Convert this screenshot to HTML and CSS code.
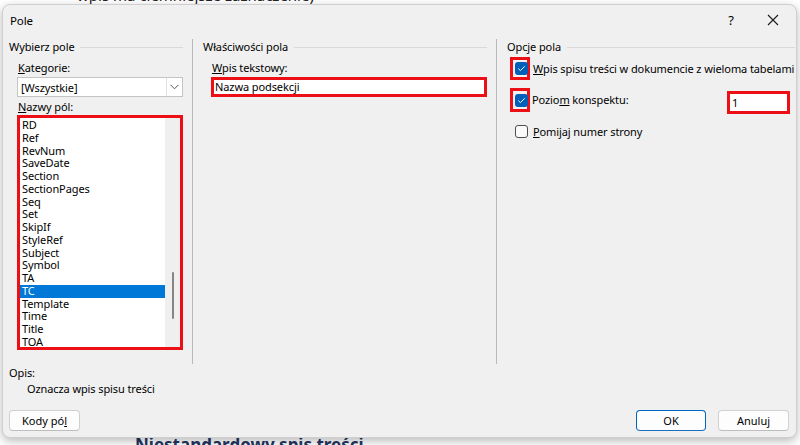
FILE: index.html
```html
<!DOCTYPE html>
<html lang="pl">
<head>
<meta charset="utf-8">
<title>Pole</title>
<link rel="stylesheet" href="styles.css">
</head>
<body>
<div class="doc-text doc-top">wpis ma ciemniejsze zaznaczenie)</div>
<div class="doc-text doc-bottom">Niestandardowy spis treści</div>

<div class="dialog">
  <div class="titlebar">
    <span class="title">Pole</span>
    <div class="tb-buttons">
      <span class="tb-btn help">?</span>
      <span class="tb-btn close">
        <svg width="12" height="12" viewBox="0 0 12 12"><path d="M1 1 L11 11 M11 1 L1 11" stroke="#1a1a1a" stroke-width="1.1" fill="none"/></svg>
      </span>
    </div>
  </div>

  <div class="main">
    <section class="col col1">
      <div class="group-head">Wybierz pole</div>
      <div class="col-body">
        <div class="lbl lbl-first"><u>K</u>ategorie:</div>
        <div class="combo">
          <span class="combo-text">[Wszystkie]</span>
          <span class="combo-btn">
            <svg width="9" height="6" viewBox="0 0 9 6"><path d="M0.5 0.8 L4.5 4.8 L8.5 0.8" stroke="#555" stroke-width="1" fill="none"/></svg>
          </span>
        </div>
        <div class="lbl lbl-second"><u>N</u>azwy pól:</div>
        <div class="listbox mark">
          <ul class="items">
            <li>RD</li><li>Ref</li><li>RevNum</li><li>SaveDate</li><li>Section</li><li>SectionPages</li><li>Seq</li><li>Set</li><li>SkipIf</li><li>StyleRef</li><li>Subject</li><li>Symbol</li><li>TA</li><li class="sel">TC</li><li>Template</li><li>Time</li><li>Title</li><li>TOA</li>
          </ul>
          <div class="scrollbar"><div class="thumb"></div></div>
        </div>
      </div>
    </section>

    <section class="col col2">
      <div class="group-head">Właściwości pola</div>
      <div class="col-body">
        <div class="lbl lbl-first"><u>W</u>pis tekstowy:</div>
        <div class="textbox mark">Nazwa podsekcji</div>
      </div>
    </section>

    <section class="col col3">
      <div class="group-head">Opcje pola</div>
      <div class="opt opt1">
        <span class="mark cbwrap"><span class="cb on"><svg width="11" height="11" viewBox="0 0 11 11"><path d="M2.3 5.6 L4.4 7.6 L8.7 3.3" stroke="#fff" stroke-width="1" fill="none"/></svg></span></span>
        <span class="opt-label"><u>W</u>pis spisu treści w dokumencie z wieloma tabelami</span>
      </div>
      <div class="opt opt2">
        <span class="mark cbwrap cbwrap2"><span class="cb on"><svg width="11" height="11" viewBox="0 0 11 11"><path d="M2.3 5.6 L4.4 7.6 L8.7 3.3" stroke="#fff" stroke-width="1" fill="none"/></svg></span></span>
        <span class="opt-label">Pozio<u>m</u> konspektu:</span>
        <span class="mark levelbox">1</span>
      </div>
      <div class="opt opt3">
        <span class="cb off"></span>
        <span class="opt-label"><u>P</u>omijaj numer strony</span>
      </div>
    </section>
  </div>

  <div class="desc">
    <div class="desc-lbl">Opis:</div>
    <div class="desc-text">Oznacza wpis spisu treści</div>
  </div>

  <div class="footer">
    <button class="btn">Kody pó<u>l</u></button>
    <div class="spacer"></div>
    <button class="btn btn-default">OK</button>
    <button class="btn">Anuluj</button>
  </div>
</div>
</body>
</html>
```

FILE: styles.css
```css
* { box-sizing: border-box; }
html, body { margin: 0; padding: 0; }
body {
  width: 800px;
  height: 445px;
  overflow: hidden;
  position: relative;
  background: #ffffff;
  font-family: "Noto Sans", "Open Sans", sans-serif;
  font-size: 11px;
  letter-spacing: -0.1px;
  color: #000;
}
u { text-decoration: underline; text-underline-offset: 1px; }

.doc-text { position: absolute; white-space: nowrap; letter-spacing: 0; }
.doc-top {
  left: 77px;
  top: -15px;
  font-family: "Noto Sans", sans-serif;
  font-size: 15px;
  line-height: 20px;
  color: #222;
}
.doc-bottom {
  left: 135px;
  top: 434px;
  font-family: "Noto Sans", sans-serif;
  font-size: 17px;
  line-height: 22px;
  font-weight: 700;
  color: #23355f;
}

.dialog {
  position: absolute;
  left: 2px;
  top: 4px;
  width: 795px;
  height: 434px;
  background: #f0f0f0;
  border: 1px solid #cfcfcf;
  border-radius: 8px;
  box-shadow: 0 3px 10px rgba(0,0,0,0.28);
  display: flex;
  flex-direction: column;
}

.titlebar {
  height: 30px;
  display: flex;
  align-items: center;
  padding-left: 7px;
  padding-right: 2px;
  flex: none;
}
.title { font-size: 11.5px; }
.tb-buttons { margin-left: auto; display: flex; }
.tb-btn {
  width: 42px;
  height: 30px;
  display: flex;
  align-items: center;
  justify-content: center;
  font-size: 13px;
}

.main {
  display: flex;
  padding: 4px 1px 0 6px;
  flex: none;
}
.col {
  height: 325px;
  display: flex;
  flex-direction: column;
  min-width: 0;
}
.col1 { flex: none; width: 183px; padding-right: 9px; }
.col2 { flex: none; width: 304px; border-left: 1px solid #b9b9b9; padding: 0 9px 0 10px; }
.col3 { flex: 1; border-left: 1px solid #b9b9b9; padding: 0 0 0 10px; }

.group-head {
  display: flex;
  align-items: center;
  gap: 6px;
  height: 16px;
  line-height: 16px;
  white-space: nowrap;
}
.group-head::after {
  content: "";
  flex: 1;
  height: 1px;
  background: #d9d9d9;
}

.col-body { padding-left: 8px; display: flex; flex-direction: column; }
.lbl { height: 16px; line-height: 16px; padding-left: 1px; }
.lbl-first { margin-top: 5px; }
.lbl-second { margin-top: 2px; }

.combo {
  margin-top: 1px;
  height: 20px;
  background: #fff;
  border: 1px solid #c4c4c4;
  display: flex;
  align-items: center;
}
.combo-text { flex: 1; padding-left: 3px; }
.combo-btn {
  width: 16px;
  height: 18px;
  border-left: 1px solid #e2e2e2;
  display: flex;
  align-items: center;
  justify-content: center;
}

.mark { border: 3px solid #ec0f16; }

.listbox {
  height: 235px;
  background: #fff;
  display: flex;
  overflow: hidden;
}
.items {
  list-style: none;
  margin: 0;
  padding: 1px 0 0 0;
  flex: 1;
  overflow: hidden;
}
.items li {
  height: 12.75px;
  line-height: 12.75px;
  padding-left: 2px;
  white-space: nowrap;
}
.items li.sel { background: #0078d7; color: #fff; margin-left: -1px; padding-left: 3px; }
.scrollbar {
  width: 15px;
  background: #efefef;
  position: relative;
  flex: none;
}
.thumb {
  position: absolute;
  left: 7px;
  top: 154px;
  width: 2px;
  height: 47px;
  border-radius: 1px;
  background: #858585;
}

.textbox {
  margin-top: 1px;
  height: 20px;
  background: #fff;
  line-height: 14px;
  padding-left: 1px;
  white-space: nowrap;
}

.opt { display: flex; align-items: center; }
.opt1 { margin-top: 2px; padding-left: 3px; }
.opt2 { margin-top: 8px; padding-left: 3px; padding-right: 5px; align-items: flex-start; }
.opt3 { margin-top: 10px; padding-left: 8px; }
.cbwrap {
  width: 20px;
  height: 23px;
  padding: 2px 0 0 2px;
  display: flex;
  align-items: flex-start;
  flex: none;
}
.cbwrap2 { height: 24px; padding-top: 3px; }
.cb {
  width: 13px;
  height: 13px;
  border-radius: 3px;
  display: flex;
  align-items: center;
  justify-content: center;
  flex: none;
}
.cb.on { background: #005fb8; }
.cb.off { border: 1px solid #4e4e4e; background: #fafafa; }
.opt-label { white-space: nowrap; }
.opt1 .opt-label { margin-left: 3px; }
.opt2 .opt-label { margin-left: 2px; margin-top: 4px; }
.opt3 .opt-label { margin-left: 5px; }
.levelbox {
  margin-left: auto;
  margin-top: 3px;
  width: 63px;
  height: 23px;
  background: #fff;
  padding-left: 2px;
  line-height: 17px;
}

.desc { padding-left: 6px; margin-top: 1px; flex: none; }
.desc-lbl { height: 16px; line-height: 16px; }
.desc-text { height: 16px; line-height: 16px; padding-left: 18px; }

.footer {
  display: flex;
  padding: 13px 7px 0 6px;
  gap: 12px;
  flex: none;
}
.spacer { flex: 1; }
.btn {
  font: inherit;
  font-size: 11px;
  color: #000;
  width: 71px;
  height: 21px;
  padding: 0;
  background: #fdfdfd;
  border: 1px solid #d0d0d0;
  border-bottom-color: #bdbdbd;
  border-radius: 4px;
}
.btn-default { width: 70px; border: 1px solid #0067c0; border-bottom-color: #1a6fc0; }
```
